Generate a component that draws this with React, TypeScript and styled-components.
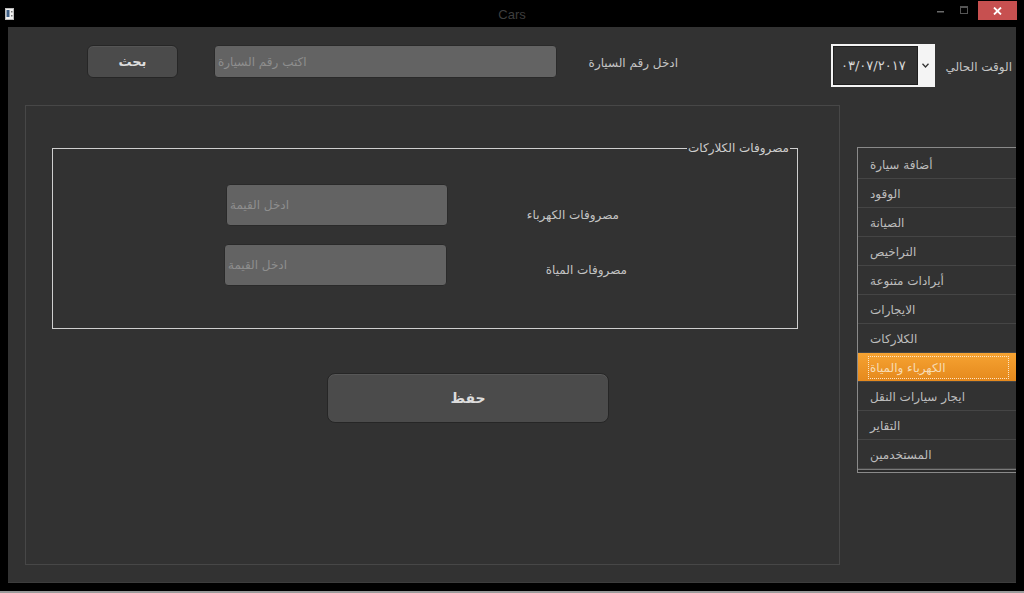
import React from "react";
import styled, { createGlobalStyle } from "styled-components";

const GlobalStyle = createGlobalStyle`
  html, body {
    margin: 0;
    padding: 0;
    background: #000;
  }
  * {
    box-sizing: border-box;
  }
  input::placeholder {
    color: #8e8e8e;
    opacity: 1;
  }
`;

const Window = styled.div`
  width: 1024px;
  height: 593px;
  background: #000;
  overflow: hidden;
  display: flex;
  flex-direction: column;
  font-family: "DejaVu Sans", "Noto Sans", sans-serif;
  border-bottom: 2px solid #9a9a9a;
`;

const TitleBar = styled.div`
  height: 27px;
  display: grid;
  grid-template-columns: 1fr auto 1fr;
  align-items: start;
`;

const AppIcon = styled.div`
  padding: 8px 0 0 5px;
  display: flex;
`;

const Title = styled.div`
  font-family: "Liberation Sans", Arial, sans-serif;
  font-size: 13px;
  color: #3e3e3e;
  padding-top: 7px;
`;

const Controls = styled.div`
  display: flex;
  justify-content: flex-end;
  padding-right: 7px;
  gap: 2px;
`;

const CtrlBtn = styled.div<{ $close?: boolean }>`
  width: ${(p) => (p.$close ? "39px" : "21px")};
  height: 19px;
  margin-top: ${(p) => (p.$close ? "1px" : "0")};
  margin-left: ${(p) => (p.$close ? "2px" : "0")};
  background: ${(p) => (p.$close ? "#c75050" : "transparent")};
  display: flex;
  align-items: center;
  justify-content: center;
`;

const Client = styled.div`
  margin: 0 8px;
  height: 556px;
  background: #323232;
  overflow: hidden;
  display: flex;
  flex-direction: column;
  border-bottom: 1px solid #3c3c3c;
`;

const TopBar = styled.div`
  height: 78px;
  padding-top: 17px;
  display: flex;
  align-items: flex-start;
  flex-shrink: 0;
`;

const SearchButton = styled.button`
  margin: 1px 0 0 79px;
  width: 91px;
  height: 33px;
  background: #4b4b4b;
  border: 1px solid #262626;
  border-radius: 6px;
  color: #dedede;
  font-family: inherit;
  font-size: 13px;
  font-weight: bold;
  box-shadow: inset 0 1px 0 #555;
`;

const TextField = styled.input<{ $w: number; $h: number }>`
  width: ${(p) => p.$w}px;
  height: ${(p) => p.$h}px;
  flex-shrink: 0;
  background: #636363;
  border: 1px solid #2a2a2a;
  border-radius: 4px;
  color: #ddd;
  font-family: inherit;
  font-size: 12px;
  padding: 0 3px;
  text-align: left;
  outline: none;
`;

const SearchField = styled(TextField)`
  margin: 1px 0 0 36px;
`;

const Label = styled.div<{ $w: number; $top: number; $left: number }>`
  width: ${(p) => p.$w}px;
  flex-shrink: 0;
  margin-top: ${(p) => p.$top}px;
  margin-left: ${(p) => p.$left}px;
  line-height: 16px;
  font-size: 12px;
  color: #c4c4c4;
  text-align: right;
  white-space: nowrap;
  direction: rtl;
`;

const DateSelect = styled.div`
  margin-left: 153px;
  width: 104px;
  height: 43px;
  flex-shrink: 0;
  background: #f4f4f4;
  padding: 2px;
  display: flex;
`;

const DateField = styled.div`
  flex: 1;
  background: #323232;
  border: 1px solid #1e1e1e;
  color: #d6d6d6;
  font-size: 13px;
  display: flex;
  align-items: center;
  padding-left: 7px;
  letter-spacing: 0.5px;
`;

const Chevron = styled.div`
  width: 15px;
  display: flex;
  align-items: center;
  justify-content: center;
`;

const Body = styled.div`
  display: flex;
  align-items: flex-start;
  padding-left: 17px;
`;

const MainPanel = styled.div`
  width: 815px;
  height: 460px;
  flex-shrink: 0;
  border: 1px solid #474747;
  padding: 42px 0 0 26px;
  display: flex;
  flex-direction: column;
  align-items: flex-start;
`;

const GroupBox = styled.div`
  position: relative;
  width: 746px;
  height: 181px;
  border: 1px solid #cfcfcf;
  padding-top: 35px;
  display: flex;
  flex-direction: column;
`;

const GroupTitle = styled.span`
  position: absolute;
  top: -9px;
  right: 7px;
  background: #323232;
  padding: 0 1px;
  font-size: 12px;
  line-height: 16px;
  color: #cdcdcd;
  direction: rtl;
`;

const FieldRow = styled.div<{ $top: number; $left: number }>`
  display: flex;
  align-items: flex-start;
  margin-top: ${(p) => p.$top}px;
  padding-left: ${(p) => p.$left}px;
`;

const SaveButton = styled.button`
  margin: 44px 0 0 275px;
  width: 282px;
  height: 50px;
  background: #4b4b4b;
  border: 1px solid #262626;
  border-radius: 8px;
  color: #dcdcdc;
  font-family: inherit;
  font-size: 14px;
  font-weight: bold;
  box-shadow: inset 0 1px 0 #575757;
`;

const SideMenu = styled.ul`
  list-style: none;
  margin: 42px 0 0 17px;
  width: 162px;
  flex-shrink: 0;
  border: 1px solid #8a8a8a;
  padding: 2px 0 3px;
  box-shadow: inset 0 -2px 0 #2a2a2a, inset 0 -3px 0 #7a7a7a;
`;

const MenuItem = styled.li<{ $active?: boolean }>`
  position: relative;
  height: 29px;
  padding: 2px 0 0 12px;
  display: flex;
  align-items: center;
  direction: ltr;
  font-size: 12px;
  color: ${(p) => (p.$active ? "#f7dcb4" : "#bdbdbd")};
  border-bottom: 1px solid #454545;
  background: ${(p) =>
    p.$active ? "linear-gradient(#f6a332, #e5891d)" : "transparent"};
  span {
    direction: rtl;
  }
  &::after {
    content: "";
    display: ${(p) => (p.$active ? "block" : "none")};
    position: absolute;
    left: 10px;
    right: 9px;
    top: 3px;
    bottom: 2px;
    border: 1px dotted #fbe3c4;
  }
`;

const menu = [
  "أضافة سيارة",
  "الوقود",
  "الصيانة",
  "التراخيص",
  "أيرادات متنوعة",
  "الايجارات",
  "الكلاركات",
  "الكهرباء والمياة",
  "ايجار سيارات النقل",
  "التقاير",
  "المستخدمين",
];

export default function App() {
  return (
    <>
      <GlobalStyle />
      <Window>
        <TitleBar>
          <AppIcon>
            <svg width="9" height="12" viewBox="0 0 9 12">
              <rect x="0.5" y="0.5" width="8" height="11" fill="#f2f2f2" stroke="#bbb" />
              <rect x="1.5" y="2" width="3" height="7" fill="#3d5f86" />
              <rect x="6" y="3" width="1.5" height="1.5" fill="#777" />
              <rect x="6" y="7" width="1.5" height="1.5" fill="#777" />
            </svg>
          </AppIcon>
          <Title>Cars</Title>
          <Controls>
            <CtrlBtn>
              <svg width="7" height="7" viewBox="0 0 7 7">
                <rect x="0" y="5" width="7" height="1.5" fill="#6a6a6a" />
              </svg>
            </CtrlBtn>
            <CtrlBtn>
              <svg width="8" height="8" viewBox="0 0 8 8">
                <rect x="0.5" y="0.5" width="7" height="7" fill="none" stroke="#555" />
                <rect x="0.5" y="0.5" width="7" height="1.5" fill="#555" />
              </svg>
            </CtrlBtn>
            <CtrlBtn $close>
              <svg width="9" height="8" viewBox="0 0 9 8">
                <path d="M1 0.5 L8 7.5 M8 0.5 L1 7.5" stroke="#fff" strokeWidth="1.8" />
              </svg>
            </CtrlBtn>
          </Controls>
        </TitleBar>
        <Client>
          <TopBar>
            <SearchButton>بحث</SearchButton>
            <SearchField $w={343} $h={33} placeholder="اكتب رقم السيارة" />
            <Label $w={86} $top={11} $left={35}>
              ادخل رقم السيارة
            </Label>
            <DateSelect>
              <DateField dir="ltr">٠٣/٠٧/٢٠١٧</DateField>
              <Chevron>
                <svg width="7" height="5" viewBox="0 0 7 5">
                  <path d="M0.5 0.8 L3.5 4 L6.5 0.8" fill="none" stroke="#333" strokeWidth="1.3" />
                </svg>
              </Chevron>
            </DateSelect>
            <Label $w={65} $top={15} $left={12}>
              الوقت الحالي
            </Label>
          </TopBar>
          <Body>
            <MainPanel>
              <GroupBox>
                <GroupTitle>مصروفات الكلاركات</GroupTitle>
                <FieldRow $top={0} $left={173}>
                  <TextField $w={222} $h={42} placeholder="ادخل القيمة" />
                  <Label $w={171} $top={23} $left={0}>
                    مصروفات الكهرباء
                  </Label>
                </FieldRow>
                <FieldRow $top={18} $left={171}>
                  <TextField $w={223} $h={42} placeholder="ادخل القيمة" />
                  <Label $w={180} $top={18} $left={0}>
                    مصروفات المياة
                  </Label>
                </FieldRow>
              </GroupBox>
              <SaveButton>حفظ</SaveButton>
            </MainPanel>
            <SideMenu>
              {menu.map((m, i) => (
                <MenuItem key={m} $active={i === 7}>
                  <span>{m}</span>
                </MenuItem>
              ))}
            </SideMenu>
          </Body>
        </Client>
      </Window>
    </>
  );
}
